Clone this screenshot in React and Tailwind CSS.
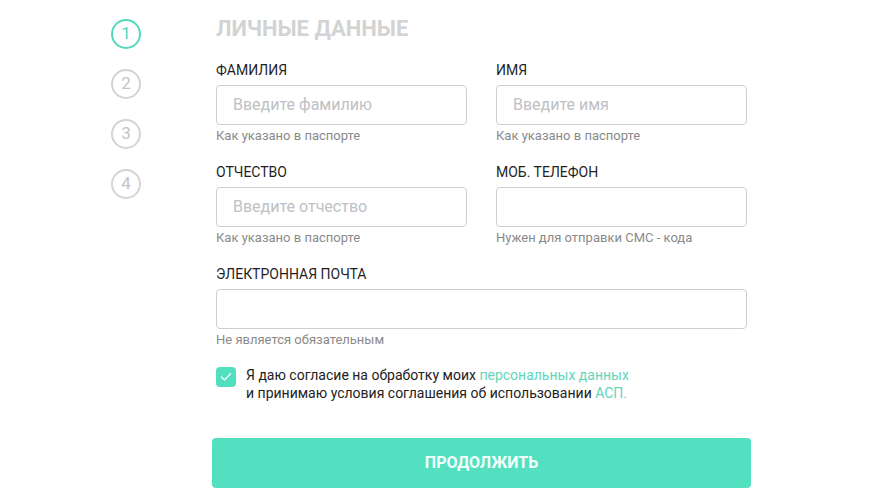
import React from "react";

function Step({ n, active }) {
  return (
    <div
      className={
        "w-[30px] h-[30px] rounded-full border-2 flex items-center justify-center text-[17px] " +
        (active ? "border-[#52d9bb] text-[#52d9bb]" : "border-[#d4d4d4] text-[#c4c4c4]")
      }
    >
      {n}
    </div>
  );
}

function Field({ label, placeholder, hint }) {
  return (
    <div className="flex flex-col">
      <div className="h-[20px] leading-[20px] text-[14px] font-normal text-[#1f1f1f]">{label}</div>
      <div className="mt-[5px] h-[40px] rounded-[4px] border border-[#cfcfcf] bg-white flex items-center px-4 text-[16px] text-[#bdc1c5]">
        {placeholder}
      </div>
      <div className="mt-[1px] h-[20px] leading-[20px] text-[13px] text-[#8a8a8a]">{hint}</div>
    </div>
  );
}

export default function App() {
  return (
    <div
      className="w-[893px] h-[495px] bg-white flex overflow-hidden"
      style={{ fontFamily: "Roboto, 'Noto Sans', sans-serif" }}
    >
      <div className="ml-[111px] mt-[19px] flex flex-col gap-[20px]">
        <Step n={1} active />
        <Step n={2} />
        <Step n={3} />
        <Step n={4} />
      </div>
      <div className="ml-[75px] w-[531px] flex flex-col">
        <div className="mt-[15px] h-[28px] leading-[28px] text-[22px] font-bold text-[#d3d3d3]">
          ЛИЧНЫЕ ДАННЫЕ
        </div>
        <div className="mt-[17px] grid grid-cols-2 gap-x-[29px] gap-y-[16px]">
          <Field label="ФАМИЛИЯ" placeholder="Введите фамилию" hint="Как указано в паспорте" />
          <Field label="ИМЯ" placeholder="Введите имя" hint="Как указано в паспорте" />
          <Field label="ОТЧЕСТВО" placeholder="Введите отчество" hint="Как указано в паспорте" />
          <Field label="МОБ. ТЕЛЕФОН" placeholder="" hint="Нужен для отправки СМС - кода" />
          <div className="col-span-2">
            <Field label="ЭЛЕКТРОННАЯ ПОЧТА" placeholder="" hint="Не является обязательным" />
          </div>
        </div>
        <div className="mt-[16px] flex items-start gap-[10px]">
          <div className="mt-[1px] w-[20px] h-[20px] rounded-[4px] bg-[#52dfbf] flex items-center justify-center">
            <svg width="12" height="10" viewBox="0 0 12 10" fill="none">
              <path d="M1.5 5.2 L4.5 8 L10.5 1.8" stroke="#e6fbf5" strokeWidth="1.6" strokeLinecap="round" strokeLinejoin="round" />
            </svg>
          </div>
          <div className="text-[14px] leading-[18px] text-[#222]">
            <div>
              Я даю согласие на обработку моих <span className="text-[#5fd6ba]">персональных данных</span>
            </div>
            <div>
              и принимаю условия соглашения об использовании <span className="text-[#5fd6ba]">АСП.</span>
            </div>
          </div>
        </div>
        <div className="-mx-[4px] mt-[36px] h-[50px] rounded-[4px] bg-[#52e0c0] flex items-center justify-center text-[16px] font-bold text-[#f2fffb]">
          ПРОДОЛЖИТЬ
        </div>
      </div>
    </div>
  );
}
